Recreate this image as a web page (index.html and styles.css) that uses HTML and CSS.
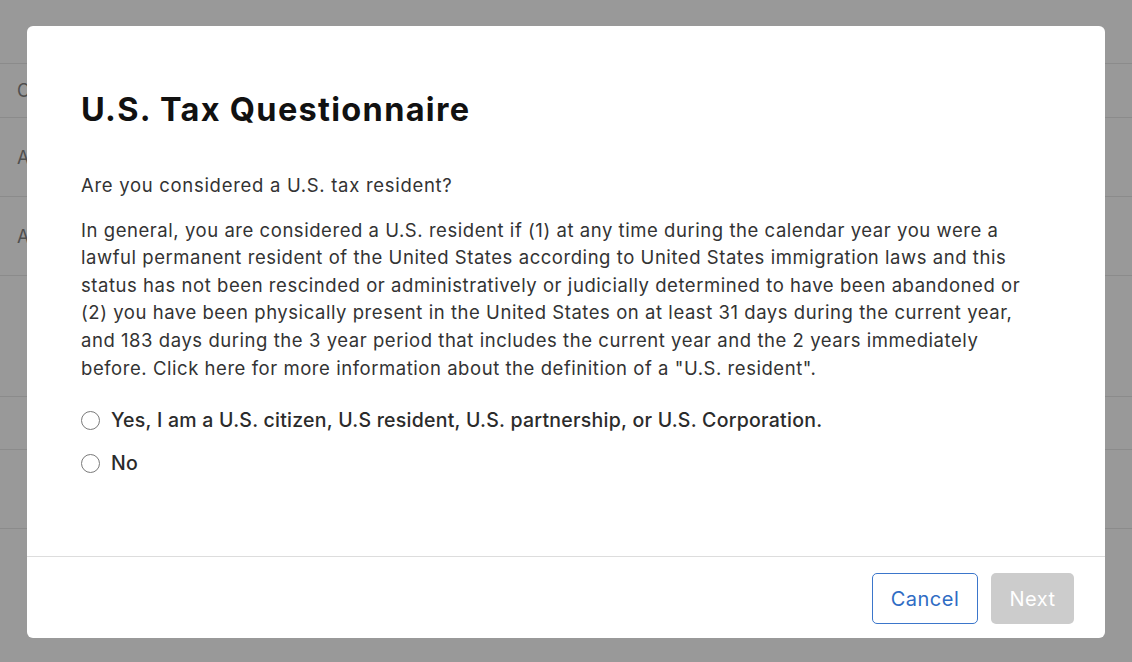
FILE: index.html
```html
<!DOCTYPE html>
<html lang="en">
<head>
<meta charset="utf-8">
<title>U.S. Tax Questionnaire</title>
<link rel="stylesheet" href="styles.css">
</head>
<body>
<div class="page">
  <div class="row row-top"></div>
  <div class="row row-head"><span>Country</span></div>
  <div class="row row-a"><span>Account</span></div>
  <div class="row row-a"><span>Address</span></div>
  <div class="row row-b"></div>
  <div class="row row-c"></div>
  <div class="row row-a"></div>
  <div class="row row-last"></div>
</div>
<div class="overlay">
  <div class="modal">
    <div class="modal-body">
      <h1 class="title">U.S. Tax Questionnaire</h1>
      <p class="question">Are you considered a U.S. tax resident?</p>
      <p class="para">In general, you are considered a U.S. resident if (1) at any time during the calendar year you were a lawful permanent resident of the United States according to United States immigration laws and this status has not been rescinded or administratively or judicially determined to have been abandoned or (2) you have been physically present in the United States on at least 31 days during the current year, and 183 days during the 3 year period that includes the current year and the 2 years immediately before. Click here for more information about the definition of a "U.S. resident".</p>
      <label class="radio first"><span class="circle"></span><span class="label">Yes, I am a U.S. citizen, U.S resident, U.S. partnership, or U.S. Corporation.</span></label>
      <label class="radio"><span class="circle"></span><span class="label">No</span></label>
    </div>
    <div class="modal-footer">
      <button class="btn btn-cancel">Cancel</button>
      <button class="btn btn-next">Next</button>
    </div>
  </div>
</div>
</body>
</html>
```

FILE: styles.css
```css
* { box-sizing: border-box; }
html, body { margin: 0; padding: 0; }
body {
  width: 1132px;
  height: 662px;
  overflow: hidden;
  background: #999999;
  font-family: Inter, "Noto Sans", sans-serif;
  position: relative;
}
.page {
  display: flex;
  flex-direction: column;
}
.row {
  border-bottom: 1px solid #8b8b8b;
  display: flex;
  align-items: center;
  padding-left: 17px;
  font-size: 18px;
  color: #4f4f4f;
}
.row-top { height: 64px; }
.row-head { height: 54px; }
.row-a { height: 79px; }
.row-b { height: 121px; }
.row-c { height: 53px; }
.row-last { height: 134px; border-bottom: none; }

.overlay {
  position: absolute;
  inset: 0;
  padding: 26px 27px 24px 27px;
  display: flex;
}
.modal {
  flex: 1;
  background: #ffffff;
  border-radius: 6px;
  display: flex;
  flex-direction: column;
}
.modal-body {
  flex: 1;
  padding: 64px 54px 0 54px;
  display: flex;
  flex-direction: column;
}
.title {
  margin: 0;
  font-size: 32.5px;
  font-weight: 700;
  color: #111111;
  line-height: 40px;
  letter-spacing: 1.3px;
}
.question {
  margin: 42px 0 0 0;
  font-size: 18.5px;
  line-height: 27.6px;
  letter-spacing: 0.7px;
  color: #333333;
}
.para {
  margin: 17px 0 0 0;
  max-width: 955px;
  font-size: 18.5px;
  line-height: 27.6px;
  letter-spacing: 0.55px;
  color: #333333;
}
.radio {
  display: flex;
  align-items: center;
  gap: 11px;
  height: 30px;
  margin-top: 13px;
}
.radio.first { margin-top: 23px; }
.circle {
  width: 19px;
  height: 19px;
  border: 1.5px solid #7a7a7a;
  border-radius: 50%;
  flex: none;
}
.label {
  font-size: 19.5px;
  font-weight: 500;
  letter-spacing: 0.25px;
  color: #2b2b2b;
}
.modal-footer {
  border-top: 1px solid #dddddd;
  height: 82px;
  display: flex;
  justify-content: flex-end;
  align-items: center;
  gap: 13px;
  padding: 2px 31px 0 0;
}
.btn {
  font-family: Inter, "Noto Sans", sans-serif;
  font-size: 20px;
  letter-spacing: 0.5px;
  height: 51px;
  border-radius: 5px;
  padding: 0;
  cursor: pointer;
}
.btn-cancel {
  background: #ffffff;
  border: 1.5px solid #3b76cb;
  color: #2f6cc4;
  width: 106px;
}
.btn-next {
  background: #cccccc;
  border: none;
  color: #ffffff;
  width: 83px;
}
```
